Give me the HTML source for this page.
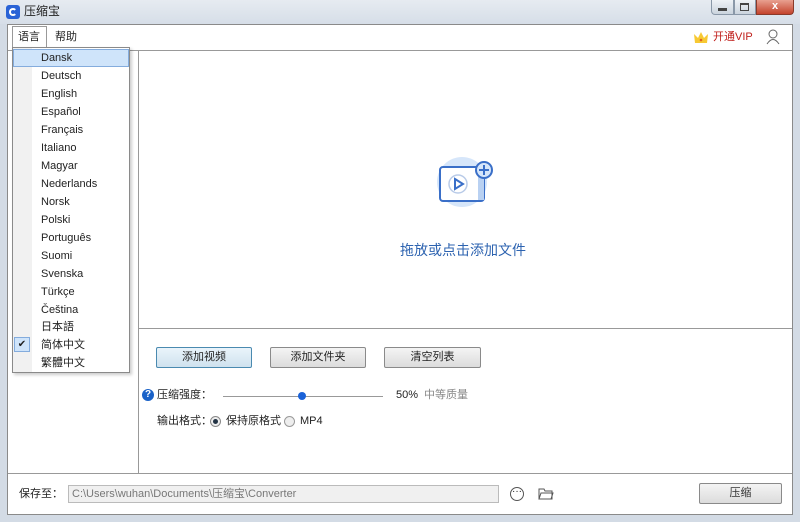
<!DOCTYPE html><html><head><meta charset="utf-8"><style>
*{margin:0;padding:0;box-sizing:border-box}
body{width:800px;height:522px;overflow:hidden;background:#d3dbe5;font-family:"Liberation Sans","Noto Sans CJK SC",sans-serif;font-size:11px;line-height:13px;color:#222;position:relative}
.abs{position:absolute}
.btn{position:absolute;height:21px;border:1px solid #8a8a8a;border-radius:2px;background:linear-gradient(#f4f4f4,#dcdcdc);text-align:center;line-height:19px;font-size:11px}
.item{position:absolute;left:29px;font-size:11px;color:#222}
</style></head><body>
<div class="abs" style="left:0;top:0;width:800px;height:24px;background:linear-gradient(#e6ebf1,#d6dee8)"></div>
<div class="abs" style="left:6px;top:5px;width:14px;height:14px;border-radius:3px;background:#2a63d6"></div>
<div class="abs" style="left:9px;top:8px;width:8px;height:8px;border:2px solid #fff;border-right-color:transparent;border-radius:50%"></div>
<div class="abs" style="left:24px;top:4px;font-size:12px;line-height:14px">压缩宝</div>
<div class="abs" style="left:711px;top:0;width:23px;height:15px;border:1px solid #8a98a8;border-top:0;border-radius:0 0 0 4px;background:linear-gradient(#eef2f6,#cbd4de)"></div>
<div class="abs" style="left:718px;top:8px;width:9px;height:3px;background:#444"></div>
<div class="abs" style="left:734px;top:0;width:22px;height:15px;border:1px solid #8a98a8;border-top:0;background:linear-gradient(#eef2f6,#cbd4de)"></div>
<div class="abs" style="left:740px;top:3px;width:9px;height:8px;border:1px solid #444;border-top-width:2px"></div>
<div class="abs" style="left:756px;top:0;width:38px;height:15px;border:1px solid #8a3a2a;border-top:0;border-radius:0 0 4px 0;background:linear-gradient(#e8a090,#c4432c);color:#fff;font-weight:bold;text-align:center;line-height:13px;font-size:11px">x</div>
<div class="abs" style="left:7px;top:24px;width:786px;height:491px;background:#fff;border:1px solid #8a8a8a"></div>
<div class="abs" style="left:12px;top:26px;width:35px;height:24px;border:1px solid #999;border-bottom:0;background:#fff"></div>
<div class="abs" style="left:18px;top:31px">语言</div>
<div class="abs" style="left:55px;top:31px">帮助</div>
<div class="abs" style="left:693px;top:30px;width:16px;height:14px"><svg width="16" height="14"><path d="M1 4L5 8L8 2L11 8L15 4L14 13H2Z" fill="#f7c933"/><circle cx="8" cy="10" r="1.3" fill="#e06020"/></svg></div>
<div class="abs" style="left:713px;top:31px;color:#c0201c">开通VIP</div>
<div class="abs" style="left:766px;top:29px"><svg width="14" height="16"><circle cx="7" cy="5" r="4" fill="none" stroke="#666"/><path d="M1 15Q7 6 13 15" fill="none" stroke="#666"/></svg></div>
<div class="abs" style="left:8px;top:50px;width:784px;height:1px;background:#999"></div>
<div class="abs" style="left:138px;top:50px;width:1px;height:423px;background:#999"></div>
<div class="abs" style="left:139px;top:328px;width:653px;height:1px;background:#999"></div>
<div class="abs" style="left:8px;top:473px;width:784px;height:1px;background:#999"></div>
<svg class="abs" style="left:436px;top:155px" width="60" height="60"><circle cx="26" cy="27" r="25" fill="#d6e6fa"/><rect x="4" y="12" width="44" height="34" rx="3" fill="#fff" stroke="#3a6fc8" stroke-width="2"/><rect x="42" y="13" width="6" height="32" fill="#b9d1f2"/><circle cx="22" cy="29" r="9" fill="none" stroke="#b9cbe8" stroke-width="1.5"/><path d="M19 24L27 29L19 34Z" fill="none" stroke="#3a6fc8" stroke-width="2"/><circle cx="48" cy="15" r="8" fill="#d6e6fa" stroke="#3a6fc8" stroke-width="2"/><path d="M48 10V20M43 15H53" stroke="#3a6fc8" stroke-width="2"/></svg>
<div class="abs" style="left:400px;top:242px;font-size:14px;line-height:16px;color:#2d63b0">拖放或点击添加文件</div>
<div class="btn" style="left:156px;top:347px;width:96px;border-color:#4a8ab0;background:linear-gradient(#eaf4fb,#cfe2ee)">添加视频</div>
<div class="btn" style="left:270px;top:347px;width:96px">添加文件夹</div>
<div class="btn" style="left:384px;top:347px;width:97px">清空列表</div>
<div class="abs" style="left:142px;top:389px;width:12px;height:12px;border-radius:50%;background:#1a62c8;color:#fff;font-size:10px;font-weight:bold;text-align:center;line-height:12px">?</div>
<div class="abs" style="left:157px;top:389px">压缩强度：</div>
<div class="abs" style="left:223px;top:396px;width:160px;height:1px;background:#999"></div>
<div class="abs" style="left:298px;top:392px;width:8px;height:8px;border-radius:50%;background:#1a62d8"></div>
<div class="abs" style="left:396px;top:389px">50%</div>
<div class="abs" style="left:424px;top:389px;color:#888">中等质量</div>
<div class="abs" style="left:157px;top:415px">输出格式：</div>
<div class="abs" style="left:210px;top:416px;width:11px;height:11px;border-radius:50%;border:1px solid #888;background:#eee"></div>
<div class="abs" style="left:213px;top:419px;width:5px;height:5px;border-radius:50%;background:#234"></div>
<div class="abs" style="left:226px;top:415px">保持原格式</div>
<div class="abs" style="left:284px;top:416px;width:11px;height:11px;border-radius:50%;border:1px solid #999;background:#eee"></div>
<div class="abs" style="left:300px;top:415px">MP4</div>
<div class="abs" style="left:19px;top:488px">保存至：</div>
<div class="abs" style="left:68px;top:485px;width:431px;height:18px;border:1px solid #bbb;background:#f0f0f0;color:#777;padding-left:3px;line-height:16px">C:\Users\wuhan\Documents\压缩宝\Converter</div>
<div class="abs" style="left:510px;top:487px;width:14px;height:14px;border:1px solid #555;border-radius:50%;text-align:center;line-height:7px;font-size:10px">···</div>
<svg class="abs" style="left:538px;top:487px" width="16" height="14"><path d="M1 2H6L7 4H14V12H1Z M3 6H15L13 12H1Z" fill="none" stroke="#555"/></svg>
<div class="btn" style="left:699px;top:483px;width:83px;color:#333">压缩</div>
<div class="abs" style="left:12px;top:47px;width:118px;height:326px;background:#fff;border:1px solid #8a8a8a;box-shadow:2px 2px 3px rgba(0,0,0,.2)"></div>
<div class="abs" style="left:13px;top:48px;width:19px;height:324px;background:#f1f1f1"></div>
<div class="abs" style="left:13px;top:49px;width:116px;height:18px;background:#cfe4fa;border:1px solid #84acdd"></div>
<div class="abs" style="left:14px;top:337px;width:16px;height:15px;background:#cfe4fa;border:1px solid #84acdd;text-align:center;line-height:13px;font-size:10px">✔</div>
<div class="item" style="left:41px;top:52px">Dansk</div>
<div class="item" style="left:41px;top:70px">Deutsch</div>
<div class="item" style="left:41px;top:88px">English</div>
<div class="item" style="left:41px;top:106px">Español</div>
<div class="item" style="left:41px;top:124px">Français</div>
<div class="item" style="left:41px;top:142px">Italiano</div>
<div class="item" style="left:41px;top:160px">Magyar</div>
<div class="item" style="left:41px;top:178px">Nederlands</div>
<div class="item" style="left:41px;top:196px">Norsk</div>
<div class="item" style="left:41px;top:214px">Polski</div>
<div class="item" style="left:41px;top:232px">Português</div>
<div class="item" style="left:41px;top:250px">Suomi</div>
<div class="item" style="left:41px;top:268px">Svenska</div>
<div class="item" style="left:41px;top:286px">Türkçe</div>
<div class="item" style="left:41px;top:304px">Čeština</div>
<div class="item" style="left:41px;top:321px">日本語</div>
<div class="item" style="left:41px;top:339px">简体中文</div>
<div class="item" style="left:41px;top:357px">繁體中文</div>
</body></html>
